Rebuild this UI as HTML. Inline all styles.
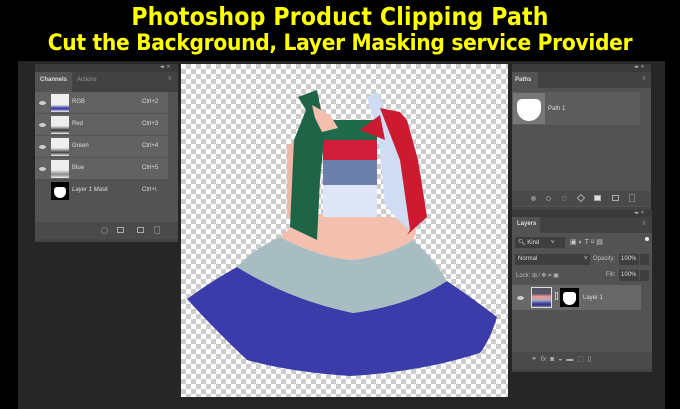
<!DOCTYPE html>
<html><head><meta charset="utf-8"><style>
*{margin:0;padding:0;box-sizing:border-box}
body{width:680px;height:409px;background:#000;position:relative;overflow:hidden;font-family:"Liberation Sans",sans-serif}
.t{position:absolute;left:0;width:680px;text-align:center;color:#ffff00;font-weight:bold;line-height:24px;font-family:"DejaVu Sans Condensed","DejaVu Sans","Liberation Sans",sans-serif;letter-spacing:-0.3px;white-space:nowrap}
.ws{position:absolute;left:18px;top:61px;width:647px;height:348px;background:#262626}
.p{position:absolute;background:#535353}
.a{position:absolute}
.tx{position:absolute;color:#ddd;font-size:6px;white-space:nowrap}
.canvas{position:absolute;left:181px;top:64px;width:327px;height:333px;background-color:#fff;
background-image:linear-gradient(45deg,#ccc 25%,transparent 25%,transparent 75%,#ccc 75%),linear-gradient(45deg,#ccc 25%,transparent 25%,transparent 75%,#ccc 75%);
background-size:10px 10px;background-position:0 0,5px 5px}
.ic{position:absolute;width:7px;height:6px;border:1px solid #aaa}
.eye{position:absolute;width:7px;height:4px;border-radius:50%;background:#ccc}
.th{position:absolute;width:18px;height:18px;background:#ddd}
</style></head><body>
<div class="t" style="top:5px;font-size:24.5px;letter-spacing:0.2px">Photoshop Product Clipping Path</div>
<div class="t" style="top:31px;font-size:22.5px">Cut the Background, Layer Masking service Provider</div>
<div class="ws"></div>

<!-- left channels panel -->
<div class="p" style="left:35px;top:64px;width:143px;height:177px"></div>
<div class="a" style="left:35px;top:64px;width:143px;height:8px;background:#3a3a3a"></div>
<div class="tx" style="left:160px;top:64px;color:#aaa;font-size:5px">◂▸ ✕</div>
<div class="a" style="left:35px;top:72px;width:143px;height:20px;background:#424242"></div>
<div class="a" style="left:35px;top:72px;width:37px;height:20px;background:#535353"></div>
<div class="tx" style="left:40px;top:77px;font-weight:bold">Channels</div>
<div class="tx" style="left:77px;top:77px;color:#999">Actions</div>
<div class="tx" style="left:168px;top:76px;color:#999">≡</div>
<div class="a" style="left:35px;top:92px;width:133px;height:87px;background:#626262"></div>
<div class="a" style="left:35px;top:113px;width:133px;height:1px;background:#555"></div>
<div class="a" style="left:35px;top:135px;width:133px;height:1px;background:#555"></div>
<div class="a" style="left:35px;top:157px;width:133px;height:1px;background:#555"></div>
<div class="eye" style="left:39px;top:101px"></div><div class="eye" style="left:39px;top:123px"></div><div class="eye" style="left:39px;top:145px"></div><div class="eye" style="left:39px;top:167px"></div>
<div class="th" style="left:51px;top:94px;background:linear-gradient(#eee 60%,#2a2aa0 80%,#eee)"></div>
<div class="th" style="left:51px;top:116px;background:linear-gradient(#eee 55%,#333 80%,#eee)"></div>
<div class="th" style="left:51px;top:138px;background:linear-gradient(#eee 55%,#444 80%,#eee)"></div>
<div class="th" style="left:51px;top:160px;background:linear-gradient(#eee 55%,#888 80%,#eee)"></div>
<div class="th" style="left:51px;top:182px;background:#000"><div style="position:absolute;left:3px;top:5px;width:12px;height:11px;background:#fff;border-radius:3px 3px 6px 6px"></div></div>
<div class="tx" style="left:72px;top:99px">RGB</div><div class="tx" style="left:142px;top:99px">Ctrl+2</div>
<div class="tx" style="left:72px;top:121px">Red</div><div class="tx" style="left:142px;top:121px">Ctrl+3</div>
<div class="tx" style="left:72px;top:143px">Green</div><div class="tx" style="left:142px;top:143px">Ctrl+4</div>
<div class="tx" style="left:72px;top:165px">Blue</div><div class="tx" style="left:142px;top:165px">Ctrl+5</div>
<div class="tx" style="left:72px;top:187px;font-style:italic">Layer 1 Mask</div><div class="tx" style="left:142px;top:187px">Ctrl+\</div>
<div class="a" style="left:35px;top:222px;width:143px;height:17px;background:#4a4a4a"></div>
<div class="a" style="left:101px;top:227px;width:7px;height:7px;border:1px dotted #aaa;border-radius:50%"></div>
<div class="ic" style="left:117px;top:227px"></div><div class="ic" style="left:137px;top:227px"></div><div class="ic" style="left:154px;top:226px;width:6px;height:8px;border-color:#777"></div>
<div class="a" style="left:35px;top:239px;width:143px;height:3px;background:#444"></div>

<!-- canvas -->
<div class="canvas"></div>
<svg class="a" style="left:0;top:0" width="680" height="409" viewBox="0 0 680 409">
<path d="M187,299 Q210,282 237,267 Q290,300 353,313 Q410,305 447,281 Q475,300 497,317 Q490,340 480,353 Q420,372 350,376 Q290,372 247,360 Q215,330 187,299 Z" fill="#3b3ba9"/>
<path d="M237,267 Q255,248 280,237 Q320,258 353,260 Q390,255 413,240 Q435,260 447,281 Q410,305 353,313 Q290,300 237,267 Z" fill="#a7bdc1"/>
<path d="M280,237 Q295,222 320,214 L410,218 Q420,230 413,240 Q390,255 353,260 Q320,258 280,237 Z" fill="#f3c0af"/>
<path d="M287,145 L300,140 L296,225 L287,215 Z" fill="#f0b8a8"/>
<rect x="323" y="120" width="54" height="20" fill="#1e6a4a"/>
<rect x="323" y="140" width="54" height="20" fill="#d21c3c"/>
<rect x="323" y="160" width="54" height="25" fill="#6d80ab"/>
<rect x="323" y="185" width="54" height="32" fill="#dfe6f7"/>
<path d="M298,97 L317,90 L320,105 L325,130 L320,180 L317,240 L290,227 L294,140 L306,110 Z" fill="#1f6447"/>
<path d="M312,105 L330,115 L338,128 L322,132 L315,118 Z" fill="#f3bfae"/>
<path d="M367,97 L378,92 L385,110 L400,160 L410,230 L400,222 L385,205 L380,150 L372,115 Z" fill="#cfdcf3"/>
<path d="M380,108 L400,112 L407,120 L418,160 L427,217 L407,235 L410,230 L400,160 Z" fill="#cc1a30"/>
<path d="M360,130 L380,115 L385,140 Z" fill="#cc1a30"/>
</svg>

<!-- paths panel -->
<div class="p" style="left:512px;top:64px;width:139px;height:143px"></div>
<div class="a" style="left:512px;top:64px;width:139px;height:8px;background:#3a3a3a"></div>
<div class="tx" style="left:634px;top:64px;color:#aaa;font-size:5px">◂▸ ✕</div>
<div class="a" style="left:512px;top:72px;width:139px;height:16px;background:#424242"></div>
<div class="a" style="left:512px;top:72px;width:26px;height:16px;background:#535353"></div>
<div class="tx" style="left:515px;top:77px;font-weight:bold">Paths</div>
<div class="tx" style="left:642px;top:76px;color:#999">≡</div>
<div class="a" style="left:512px;top:92px;width:128px;height:33px;background:#5c5c5c"></div>
<div class="a" style="left:513px;top:93px;width:32px;height:31px;background:#777"><div style="position:absolute;left:4px;top:6px;width:24px;height:22px;background:#fff;border-radius:5px 5px 12px 12px"></div></div>
<div class="tx" style="left:548px;top:106px">Path 1</div>
<div class="a" style="left:512px;top:191px;width:139px;height:15px;background:#4a4a4a"></div>
<div class="a" style="left:531px;top:196px;width:5px;height:5px;border-radius:50%;background:#888"></div>
<div class="a" style="left:546px;top:196px;width:5px;height:5px;border-radius:50%;border:1px solid #888"></div>
<div class="a" style="left:562px;top:196px;width:5px;height:5px;border-radius:50%;border:1px dotted #888"></div>
<div class="a" style="left:578px;top:195px;width:6px;height:6px;border:1px solid #aaa;transform:rotate(45deg)"></div>
<div class="ic" style="left:594px;top:195px;background:#ddd"></div><div class="ic" style="left:612px;top:195px"></div><div class="ic" style="left:629px;top:194px;width:6px;height:8px;border-color:#777"></div>
<div class="a" style="left:512px;top:207px;width:139px;height:3px;background:#444"></div>

<!-- layers panel -->
<div class="p" style="left:512px;top:210px;width:140px;height:162px"></div>
<div class="a" style="left:512px;top:210px;width:140px;height:7px;background:#3a3a3a"></div>
<div class="tx" style="left:634px;top:210px;color:#aaa;font-size:5px">◂▸ ✕</div>
<div class="a" style="left:512px;top:217px;width:140px;height:16px;background:#424242"></div>
<div class="a" style="left:512px;top:217px;width:28px;height:16px;background:#535353"></div>
<div class="tx" style="left:517px;top:221px;font-weight:bold">Layers</div>
<div class="tx" style="left:642px;top:221px;color:#999">≡</div>
<div class="a" style="left:515px;top:237px;width:50px;height:11px;background:#3e3e3e"></div>
<div class="tx" style="left:518px;top:239px">🔍︎ Kind &nbsp;&nbsp;&nbsp;&nbsp;&nbsp;&nbsp;˅</div>
<div class="tx" style="left:570px;top:238px;font-size:7px;color:#ccc">▣ ◐ T ⌑ ▤</div>
<div class="a" style="left:645px;top:237px;width:4px;height:4px;border-radius:50%;background:#eee"></div>
<div class="a" style="left:515px;top:254px;width:75px;height:11px;background:#3e3e3e"></div>
<div class="tx" style="left:518px;top:256px">Normal</div><div class="tx" style="left:584px;top:256px">˅</div>
<div class="tx" style="left:593px;top:256px;color:#bbb">Opacity:</div>
<div class="a" style="left:619px;top:254px;width:20px;height:11px;background:#3e3e3e"></div>
<div class="tx" style="left:621px;top:256px">100%</div>
<div class="a" style="left:640px;top:254px;width:9px;height:11px;background:#3e3e3e"></div>
<div class="tx" style="left:516px;top:272px;color:#bbb">Lock: ⊞ ⁄ ✥ ⌗ ▣</div>
<div class="tx" style="left:606px;top:272px;color:#bbb">Fill:</div>
<div class="a" style="left:619px;top:270px;width:20px;height:11px;background:#3e3e3e"></div>
<div class="tx" style="left:621px;top:272px">100%</div>
<div class="a" style="left:640px;top:270px;width:9px;height:11px;background:#3e3e3e"></div>
<div class="a" style="left:512px;top:285px;width:129px;height:25px;background:#686868"></div>
<div class="eye" style="left:517px;top:296px"></div>
<div class="a" style="left:531px;top:287px;width:21px;height:21px;border:1px solid #ddd;background:linear-gradient(#556 30%,#e99 45%,#aab 65%,#2a2aa0 85%,#777)"></div>
<div class="a" style="left:555px;top:292px;width:3px;height:8px;border:1px solid #bbb"></div>
<div class="a" style="left:560px;top:288px;width:19px;height:19px;background:#000"><div style="position:absolute;left:3px;top:4px;width:13px;height:13px;background:#fff;border-radius:3px 3px 7px 7px"></div></div>
<div class="tx" style="left:583px;top:295px">Layer 1</div>
<div class="a" style="left:512px;top:352px;width:140px;height:17px;background:#4a4a4a"></div>
<div class="tx" style="left:531px;top:355px;font-size:7px;color:#aaa">⚭ &nbsp;<i>fx</i>&nbsp; ◙ &nbsp;◒ &nbsp;▬ &nbsp;⬚ &nbsp;▯</div>
<div class="a" style="left:512px;top:369px;width:140px;height:3px;background:#444"></div>
</body></html>
